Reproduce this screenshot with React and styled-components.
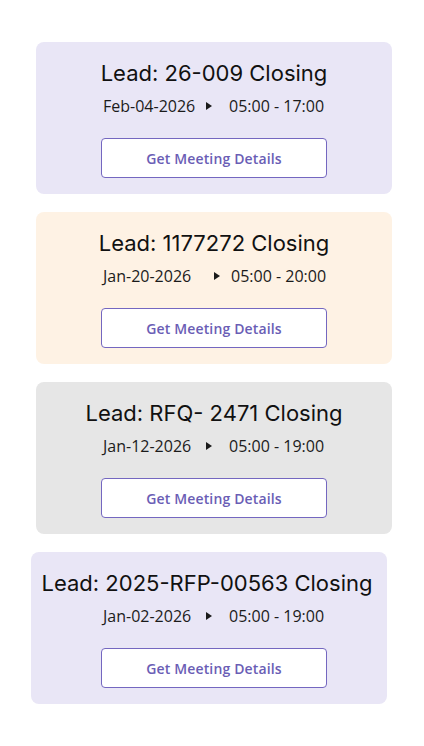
import React from 'react'
import styled, { createGlobalStyle } from 'styled-components'

const GlobalStyle = createGlobalStyle`
  body {
    margin: 0;
    background: #ffffff;
    font-family: "Open Sans", "Liberation Sans", sans-serif;
  }
`

const meetings = [
  { id: '26-009', date: 'Feb-04-2026', time: '05:00 - 17:00', bg: '#e9e6f6' },
  { id: '1177272', date: 'Jan-20-2026', time: '05:00 - 20:00', bg: '#fef2e4', tight: true },
  { id: 'RFQ- 2471', date: 'Jan-12-2026', time: '05:00 - 19:00', bg: '#e6e6e6' },
  { id: '2025-RFP-00563', date: 'Jan-02-2026', time: '05:00 - 19:00', bg: '#e9e6f6', shifted: true },
]

function App() {
  return (
    <Page>
      <GlobalStyle />
      {meetings.map((m) => (
        <Card key={m.id} $bg={m.bg} $shifted={m.shifted}>
          <Title $shifted={m.shifted}>Lead: {m.id} Closing</Title>
          <Lower $shifted={m.shifted}>
            <DateRow>
              <DateText $tight={m.tight}>{m.date}</DateText>
              <Arrow $tight={m.tight} width="6" height="8" viewBox="0 0 6 8">
                <path d="M0 0 L6 4 L0 8 Z" fill="#1b1b1b" />
              </Arrow>
              <TimeText>{m.time}</TimeText>
            </DateRow>
            <DetailsButton>Get Meeting Details</DetailsButton>
          </Lower>
        </Card>
      ))}
    </Page>
  )
}

export default App

const Page = styled.div`
  display: flex;
  flex-direction: column;
  gap: 18px;
  padding: 42px 0 40px;
`

const Card = styled.div`
  box-sizing: border-box;
  width: 356px;
  height: 152px;
  margin-left: ${(p) => (p.$shifted ? '31px' : '36px')};
  padding: 18px 0 16px;
  border-radius: 8px;
  background: ${(p) => p.$bg};
  display: flex;
  flex-direction: column;
  align-items: center;
`

const Title = styled.div`
  font-family: Inter, "Liberation Sans", sans-serif;
  font-size: 22px;
  line-height: 27px;
  color: #111111;
  white-space: nowrap;
  margin-right: ${(p) => (p.$shifted ? '4px' : '0')};
`

const Lower = styled.div`
  display: flex;
  flex-direction: column;
  align-items: center;
  padding-left: ${(p) => (p.$shifted ? '10px' : '0')};
`

const DateRow = styled.div`
  display: flex;
  align-items: center;
  width: 222px;
  margin-top: 8px;
  font-size: 16px;
  line-height: 22px;
  color: #1b1b1b;
`

const DateText = styled.span`
  width: ${(p) => (p.$tight ? '111px' : '103px')};
  flex-shrink: 0;
`

const Arrow = styled.svg`
  display: block;
  flex-shrink: 0;
  margin-right: ${(p) => (p.$tight ? '11px' : '17px')};
`

const TimeText = styled.span`
  white-space: nowrap;
`

const DetailsButton = styled.button`
  box-sizing: border-box;
  width: 226px;
  height: 40px;
  margin-top: 21px;
  background: #ffffff;
  border: 1px solid #7467c0;
  border-radius: 4px;
  font-family: "Open Sans", "Liberation Sans", sans-serif;
  font-size: 14px;
  font-weight: 600;
  letter-spacing: 0.15px;
  color: #6a5db5;
  cursor: pointer;
`
